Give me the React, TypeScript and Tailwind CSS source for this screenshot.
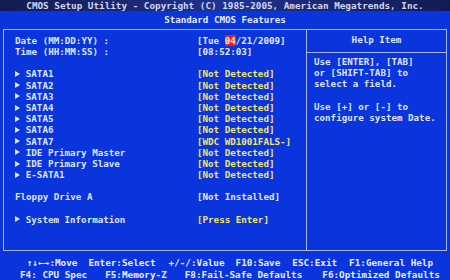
import * as React from "react";

type Row = { label?: string; value?: React.ReactNode; sub?: boolean; yellow?: boolean };

const rows: Row[] = [
  { label: "Date (MM:DD:YY) :", value: <>[Tue <span className="bg-[#e3231c] text-[#ffe8e0]">04</span>/21/2009]</> },
  { label: "Time (HH:MM:SS) :", value: "[08:52:03]" },
  {},
  { label: "SATA1", value: "[Not Detected]", sub: true, yellow: true },
  { label: "SATA2", value: "[Not Detected]", sub: true, yellow: true },
  { label: "SATA3", value: "[Not Detected]", sub: true, yellow: true },
  { label: "SATA4", value: "[Not Detected]", sub: true, yellow: true },
  { label: "SATA5", value: "[Not Detected]", sub: true, yellow: true },
  { label: "SATA6", value: "[Not Detected]", sub: true, yellow: true },
  { label: "SATA7", value: "[WDC WD1001FALS-]", sub: true, yellow: true },
  { label: "IDE Primary Master", value: "[Not Detected]", sub: true, yellow: true },
  { label: "IDE Primary Slave", value: "[Not Detected]", sub: true, yellow: true },
  { label: "E-SATA1", value: "[Not Detected]", sub: true, yellow: true },
  {},
  { label: "Floppy Drive A", value: "[Not Installed]" },
  {},
  { label: "System Information", value: "[Press Enter]", sub: true, yellow: true },
];

const help = [
  "Use [ENTER], [TAB]",
  "or [SHIFT-TAB] to",
  "select a field.",
  "",
  "Use [+] or [-] to",
  "configure system Date.",
];

function Arrow() {
  return (
    <span className="w-[10.8px] shrink-0 flex items-center">
      <svg width="5" height="6" viewBox="0 0 5 6">
        <path d="M0 0 L5 3 L0 6 Z" fill="#dfe6f8" />
      </svg>
    </span>
  );
}

export default function App() {
  return (
    <div className="w-[450px] h-[280px] bg-[#0a34dc] flex flex-col overflow-hidden font-['DejaVu_Sans_Mono',monospace] font-bold text-[9.2px] text-[#dfe6f8] whitespace-pre">
      <div className="h-[11px] flex items-center justify-center bg-gradient-to-r from-[#141a52] via-[#1f3290] to-[#141a52] text-[#cdd8f2] text-[9.3px]">
        CMOS Setup Utility - Copyright (C) 1985-2005, American Megatrends, Inc.
      </div>
      <div className="h-[18px] flex items-center justify-center text-[#e6ecff]">Standard CMOS Features</div>

      <div className="mx-[3px] h-[224px] border border-[#a9b8e8] flex">
        <div className="w-[303px] border-r border-[#a9b8e8] pt-[5px] pl-[11px] flex flex-col">
          {rows.map((r, i) => (
            <div key={i} className="h-[11.2px] leading-[11.2px] flex items-center">
              <span className="w-[182px] shrink-0 flex items-center">
                {r.sub && <Arrow />}
                {r.label}
              </span>
              <span className={r.yellow ? "text-[#f3e66c]" : "text-[#e4eaf8]"}>{r.value}</span>
            </div>
          ))}
        </div>
        <div className="flex-1 flex flex-col">
          <div className="h-[23px] border-b border-[#a9b8e8] flex items-center justify-center pb-[2px]">Help Item</div>
          <div className="pt-[3px] pl-[7px] flex flex-col">
            {help.map((h, i) => (
              <div key={i} className="h-[11.2px] leading-[11.2px]">{h}</div>
            ))}
          </div>
        </div>
      </div>

      <div className="flex-1 pt-[6px] flex flex-col text-[#e8eefa] text-[9.3px] leading-[11.5px]">
        <div className="flex pl-[27px]">
          <span>↑↓←→:Move</span>
          <span className="ml-[11px]">Enter:Select</span>
          <span className="ml-[13px]">+/-/:Value</span>
          <span className="ml-[11px]">F10:Save</span>
          <span className="ml-[12px]">ESC:Exit</span>
          <span className="ml-[12px]">F1:General Help</span>
        </div>
        <div className="flex pl-[20px]">
          <span>F4: CPU Spec</span>
          <span className="ml-[18px]">F5:Memory-Z</span>
          <span className="ml-[18px]">F8:Fail-Safe Defaults</span>
          <span className="ml-[20px]">F6:Optimized Defaults</span>
        </div>
      </div>
    </div>
  );
}
